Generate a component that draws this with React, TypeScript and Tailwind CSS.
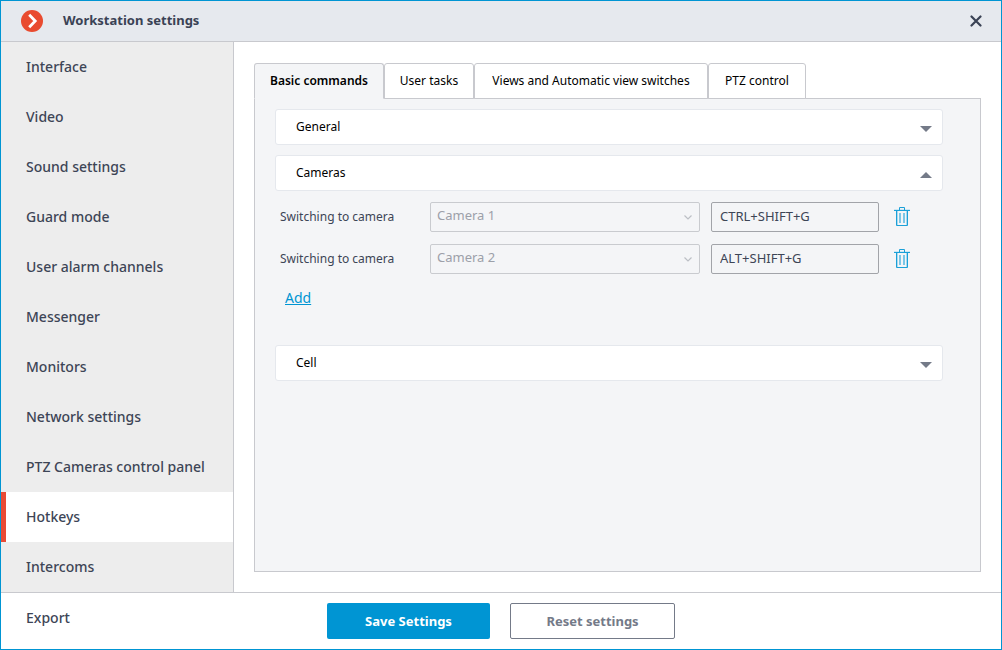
import { useState } from "react";
import { clsx } from "clsx";

const sections = [
  "Interface",
  "Video",
  "Sound settings",
  "Guard mode",
  "User alarm channels",
  "Messenger",
  "Monitors",
  "Network settings",
  "PTZ Cameras control panel",
  "Hotkeys",
  "Intercoms",
];

const tabs = [
  { name: "Basic commands", width: "min-w-[130px]" },
  { name: "User tasks", width: "min-w-[90px]" },
  { name: "Views and Automatic view switches", width: "min-w-[234px]" },
  { name: "PTZ control", width: "min-w-[98px]" },
];

const cameras = ["Camera 1", "Camera 2"];

const initialHotkeys = [
  { id: 1, camera: "Camera 1", keys: "CTRL+SHIFT+G" },
  { id: 2, camera: "Camera 2", keys: "ALT+SHIFT+G" },
];

function Logo() {
  return (
    <svg viewBox="0 0 22 22" className="size-[22px]" aria-hidden="true">
      <circle cx="11" cy="11" r="11" fill="#e94b2f" />
      <path d="M8.2 4.8l6 6.2-6 6.2" fill="none" stroke="#fff" strokeWidth="2.8" />
    </svg>
  );
}

function CloseIcon() {
  return (
    <svg viewBox="0 0 12 12" className="size-3" aria-hidden="true">
      <path
        d="M1.5 1.5l9 9M10.5 1.5l-9 9"
        stroke="#3a4254"
        strokeWidth="2.2"
        strokeLinecap="round"
      />
    </svg>
  );
}

function TrashIcon() {
  return (
    <svg viewBox="0 0 16 20" className="h-5 w-4" fill="none" aria-hidden="true">
      <path d="M3.5 4v14M12.5 4v14" stroke="#a9d9ee" />
      <path d="M0 2.5h16" stroke="#cde7f3" />
      <path d="M5.5 3.5v-3h5v3" stroke="#1ba0d8" />
      <path d="M0 3.5h16" stroke="#1ba0d8" />
      <path d="M2.5 4v14.5h11v-14.5" stroke="#1ba0d8" />
      <path d="M6 6v10M10 6v10" stroke="#7cc6e6" strokeWidth="2" />
    </svg>
  );
}

function Triangle({ up }: { up?: boolean }) {
  return (
    <svg
      viewBox="0 0 12 6"
      className={clsx("mt-1 h-1.5 w-3", up && "rotate-180")}
      aria-hidden="true"
    >
      <path d="M0 0h12l-6 6z" fill="#747a88" />
    </svg>
  );
}

function SectionLink({ name, active }: { name: string; active?: boolean }) {
  return (
    <a
      href="#"
      className={clsx(
        "flex h-[50px] items-center border-l-[5px] pb-0.5 pl-5 text-[14px] font-medium text-[#3d4556]",
        active ? "border-[#e94b35] bg-white" : "border-transparent",
      )}
    >
      {name}
    </a>
  );
}

function AccordionHeader({
  title,
  open,
  onClick,
}: {
  title: string;
  open: boolean;
  onClick: () => void;
}) {
  return (
    <button
      type="button"
      aria-expanded={open}
      onClick={onClick}
      className="flex h-9 w-full items-center justify-between rounded-[3px] border border-[#e5e8ed] bg-white pr-2.5 pl-5 text-[12px] text-black"
    >
      {title}
      <Triangle up={open} />
    </button>
  );
}

export default function App() {
  const [section, setSection] = useState("Hotkeys");
  const [tab, setTab] = useState("Basic commands");
  const [openGroup, setOpenGroup] = useState("Cameras");
  const [hotkeys, setHotkeys] = useState(initialHotkeys);

  const toggle = (name: string) => setOpenGroup(openGroup === name ? "" : name);

  const addHotkey = () =>
    setHotkeys([...hotkeys, { id: Date.now(), camera: "Camera 1", keys: "" }]);

  return (
    <div className="flex min-h-screen flex-col border border-[#0095d3] bg-white font-['Noto_Sans',sans-serif]">
      <header className="flex h-[41px] shrink-0 items-center border-b border-[#c8c9ce] bg-[#e6e9ee] pr-[19px] pl-5">
        <Logo />
        <h1 className="ml-5 text-[13px] font-bold text-[#3a4254]">
          Workstation settings
        </h1>
        <button type="button" aria-label="Close" className="ml-auto">
          <CloseIcon />
        </button>
      </header>

      <div className="flex flex-1">
        <nav className="w-[233px] shrink-0 border-r border-[#c8c9ce] bg-[#ededed]">
          {sections.map((name) => (
            <div key={name} onClick={() => setSection(name)}>
              <SectionLink name={name} active={name === section} />
            </div>
          ))}
        </nav>

        <main className="flex min-w-0 flex-1 flex-col px-5 pt-[21px] pb-5">
          {/* Tabs overlap the panel's top border */}
          <div role="tablist" className="relative -mb-px flex">
            {tabs.map(({ name, width }) => (
              <button
                key={name}
                type="button"
                role="tab"
                aria-selected={name === tab}
                onClick={() => setTab(name)}
                className={clsx(
                  "h-9 rounded-t-[3px] border border-[#c8c9ce] px-3 text-[12px] whitespace-nowrap text-black",
                  width,
                  name === tab
                    ? "border-b-[#f4f5f7] bg-[#f4f5f7] font-semibold"
                    : "bg-white",
                )}
              >
                {name}
              </button>
            ))}
          </div>

          <div className="flex-1 border border-[#c8c9ce] bg-[#f4f5f7] pt-2.5 pr-[37px] pl-5">
            <AccordionHeader
              title="General"
              open={openGroup === "General"}
              onClick={() => toggle("General")}
            />
            <div className="mt-2.5">
              <AccordionHeader
                title="Cameras"
                open={openGroup === "Cameras"}
                onClick={() => toggle("Cameras")}
              />
            </div>

            {openGroup === "Cameras" && (
              <div className="pt-[11px] pr-[33px] pb-[27px] pl-[5px]">
                <div className="space-y-3">
                  {hotkeys.map((hotkey) => (
                    <div key={hotkey.id} className="flex items-center">
                      <label
                        htmlFor={`camera-${hotkey.id}`}
                        className="w-[150px] text-[12px] text-[#3d4556]"
                      >
                        Switching to camera
                      </label>
                      <div className="relative flex-1">
                        <select
                          id={`camera-${hotkey.id}`}
                          disabled
                          defaultValue={hotkey.camera}
                          className="block h-[30px] w-full appearance-none rounded-[2px] border border-[#c9cbcf] bg-transparent px-1.5 pb-0.5 text-[13px] text-[#9ca0a9] opacity-100"
                        >
                          {cameras.map((camera) => (
                            <option key={camera}>{camera}</option>
                          ))}
                        </select>
                        <svg
                          viewBox="0 0 8 5"
                          className="pointer-events-none absolute top-[13px] right-2 h-[5px] w-2"
                          fill="none"
                          aria-hidden="true"
                        >
                          <path d="M.5 .5l3.5 3.5 3.5-3.5" stroke="#bcbfc5" strokeWidth="1.2" />
                        </svg>
                      </div>
                      <input
                        type="text"
                        aria-label="Hotkey"
                        defaultValue={hotkey.keys}
                        className="ml-[11px] h-[30px] w-[168px] rounded-[2px] border border-[#a2a4a9] bg-transparent px-2 pb-0.5 text-[13px] text-[#3d4556]"
                      />
                      <button
                        type="button"
                        aria-label="Delete hotkey"
                        className="ml-[15px]"
                        onClick={() =>
                          setHotkeys(hotkeys.filter((h) => h.id !== hotkey.id))
                        }
                      >
                        <TrashIcon />
                      </button>
                    </div>
                  ))}
                </div>
                <button
                  type="button"
                  onClick={addHotkey}
                  className="mt-3.5 ml-[5px] block h-5 text-[14px] leading-5 text-[#0095d3] underline"
                >
                  Add
                </button>
              </div>
            )}

            <div className="mt-2.5">
              <AccordionHeader
                title="Cell"
                open={openGroup === "Cell"}
                onClick={() => toggle("Cell")}
              />
            </div>
          </div>
        </main>
      </div>

      <footer className="grid h-[57px] shrink-0 grid-cols-[1fr_auto_1fr] border-t border-[#c8c9ce]">
        <SectionLink name="Export" />
        <div className="flex items-center gap-5">
          <button
            type="button"
            className="h-9 w-[163px] rounded-[2px] bg-[#0095d3] pt-0.5 text-[13px] font-bold text-white"
          >
            Save Settings
          </button>
          <button
            type="button"
            className="h-9 w-[165px] rounded-[2px] border border-[#747a88] bg-white pt-0.5 text-[13px] font-bold text-[#747a88]"
          >
            Reset settings
          </button>
        </div>
      </footer>
    </div>
  );
}
